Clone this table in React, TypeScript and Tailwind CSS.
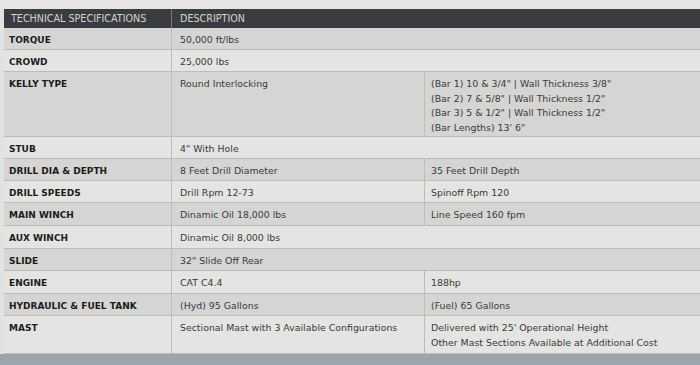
import React from "react";

interface SpecRow {
  label: string;
  desc: string[];
  extra?: string[];
  h: string;
  dark: boolean;
}

const rows: SpecRow[] = [
  { label: "TORQUE", desc: ["50,000 ft/lbs"], h: "h-[22px]", dark: true },
  { label: "CROWD", desc: ["25,000 lbs"], h: "h-[22px]", dark: false },
  {
    label: "KELLY TYPE",
    desc: ["Round Interlocking"],
    extra: [
      '(Bar 1) 10 & 3/4" | Wall Thickness 3/8"',
      '(Bar 2) 7 & 5/8" | Wall Thickness 1/2"',
      '(Bar 3) 5 & 1/2" | Wall Thickness 1/2"',
      "(Bar Lengths) 13' 6\"",
    ],
    h: "h-[65px]",
    dark: true,
  },
  { label: "STUB", desc: ['4" With Hole'], h: "h-[22px]", dark: false },
  { label: "DRILL DIA & DEPTH", desc: ["8 Feet Drill Diameter"], extra: ["35 Feet Drill Depth"], h: "h-[22px]", dark: true },
  { label: "DRILL SPEEDS", desc: ["Drill Rpm 12-73"], extra: ["Spinoff Rpm 120"], h: "h-[22px]", dark: false },
  { label: "MAIN WINCH", desc: ["Dinamic Oil 18,000 lbs"], extra: ["Line Speed 160 fpm"], h: "h-[23px]", dark: true },
  { label: "AUX WINCH", desc: ["Dinamic Oil 8,000 lbs"], h: "h-[23px]", dark: false },
  { label: "SLIDE", desc: ['32" Slide Off Rear'], h: "h-[22px]", dark: true },
  { label: "ENGINE", desc: ["CAT C4.4"], extra: ["188hp"], h: "h-[23px]", dark: false },
  { label: "HYDRAULIC & FUEL TANK", desc: ["(Hyd) 95 Gallons"], extra: ["(Fuel) 65 Gallons"], h: "h-[22px]", dark: true },
  {
    label: "MAST",
    desc: ["Sectional Mast with 3 Available Configurations"],
    extra: ["Delivered with 25' Operational Height", "Other Mast Sections Available at Additional Cost"],
    h: "h-[38px]",
    dark: false,
  },
];

function Lines({ lines }: { lines: string[] }) {
  return (
    <>
      {lines.map((l, i) => (
        <div key={i} className="whitespace-nowrap">
          {l}
        </div>
      ))}
    </>
  );
}

export default function App() {
  return (
    <div
      className="w-[700px] h-[365px] overflow-hidden bg-[#e2e2e0] flex flex-col"
      style={{ fontFamily: '"DejaVu Sans", Verdana, sans-serif' }}
    >
      {/* top strip of page above the table */}
      <div className="h-[9px] shrink-0 bg-[#e6e6e4]" />

      <div className="ml-[4px] flex flex-col leading-[14.5px]">
        {/* header */}
        <div className="grid grid-cols-[168px_253px_1fr] h-[19px] bg-[#3a3c3f] text-[#d2d3d4] text-[9.6px]">
          <div className="pl-[7px] pt-[3px] border-r border-[#77797c]">TECHNICAL SPECIFICATIONS</div>
          <div className="pl-[8px] pt-[3px]">DESCRIPTION</div>
          <div />
        </div>

        {rows.map((r) => (
          <div
            key={r.label}
            className={`grid grid-cols-[168px_253px_1fr] ${r.h} border-b border-[#bcbcba] text-[9.4px] ${
              r.dark ? "bg-[#d5d5d3]" : "bg-[#e4e4e2]"
            }`}
          >
            <div className="pl-[5px] pt-[5px] text-[9px] font-bold text-[#1c1c1c] border-r border-[#bcbcba]">
              {r.label}
            </div>
            {r.extra ? (
              <>
                <div className="pl-[8px] pt-[5px] text-[#3a3a3a] border-r border-[#bcbcba]">
                  <Lines lines={r.desc} />
                </div>
                <div className="pl-[6px] pt-[5px] text-[#3a3a3a]">
                  <Lines lines={r.extra} />
                </div>
              </>
            ) : (
              <div className="col-span-2 pl-[8px] pt-[5px] text-[#3a3a3a]">
                <Lines lines={r.desc} />
              </div>
            )}
          </div>
        ))}
      </div>

      {/* bottom edge of the monitor */}
      <div className="flex-1 bg-[#9ca4ae]" />
    </div>
  );
}
